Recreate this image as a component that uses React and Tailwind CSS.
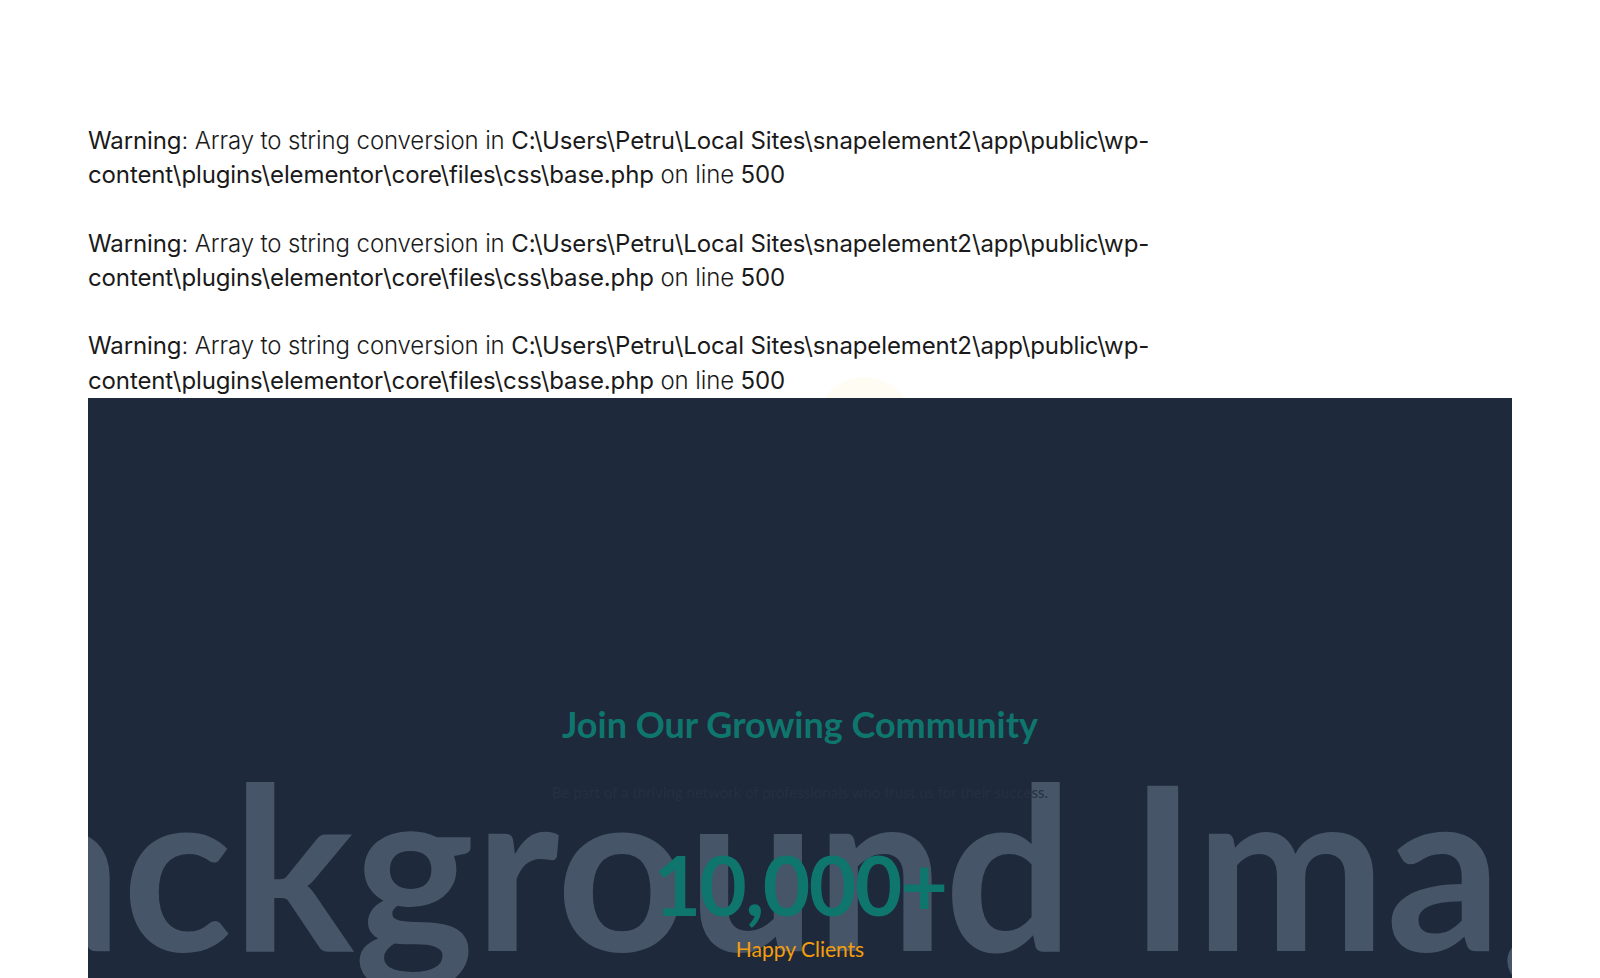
import React from "react"

const warningPath = "C:\\Users\\Petru\\Local Sites\\snapelement2\\app\\public\\wp-content\\plugins\\elementor\\core\\files\\css\\base.php"

function PhpWarning() {
    return (
        <>
            <br />
            <b className="font-normal">Warning</b>: Array to string conversion in <b className="font-normal">{warningPath}</b> on line <b className="font-normal">500</b>
            <br />
        </>
    )
}

function App() {
    return (
        <div className="min-h-screen bg-white overflow-hidden">
            <div className="relative mx-[88px] pt-[90px]">
                <div className="absolute left-[728px] top-[377px] w-[97px] h-[97px] rounded-full bg-[#fffcf3]" />
                <div className="relative text-[24px] leading-[34.2px] font-light text-[#1a1a1a] tracking-[-0.005em] font-['Inter','Noto_Sans',sans-serif]">
                    <PhpWarning />
                    <PhpWarning />
                    <PhpWarning />
                </div>

                <section className="relative h-[700px] bg-[#1e293b] overflow-hidden">
                    <div className="absolute inset-x-0 top-[351px] flex justify-center">
                        <span className="whitespace-nowrap text-[228px] leading-none font-bold text-[#475569] font-['Lato',sans-serif]">Background Image</span>
                    </div>

                    <div className="relative flex flex-col items-center pt-[305px] font-['Lato',sans-serif]">
                        <h2 className="text-[36px] leading-[42px] font-bold text-[#0f766e]">Join Our Growing Community</h2>
                        <p className="mt-[37px] text-[15px] leading-[20px] text-[#243044]">Be part of a thriving network of professionals who trust us for their success.</p>
                        <p className="mt-[37px] text-[82px] leading-[90px] font-bold text-[#0f766e] tracking-[-0.02em]">10,000+</p>
                        <p className="mt-[6px] text-[21px] leading-[28px] text-[#f59e0b]">Happy Clients</p>
                    </div>
                </section>
            </div>
        </div>
    )
}

export default App
